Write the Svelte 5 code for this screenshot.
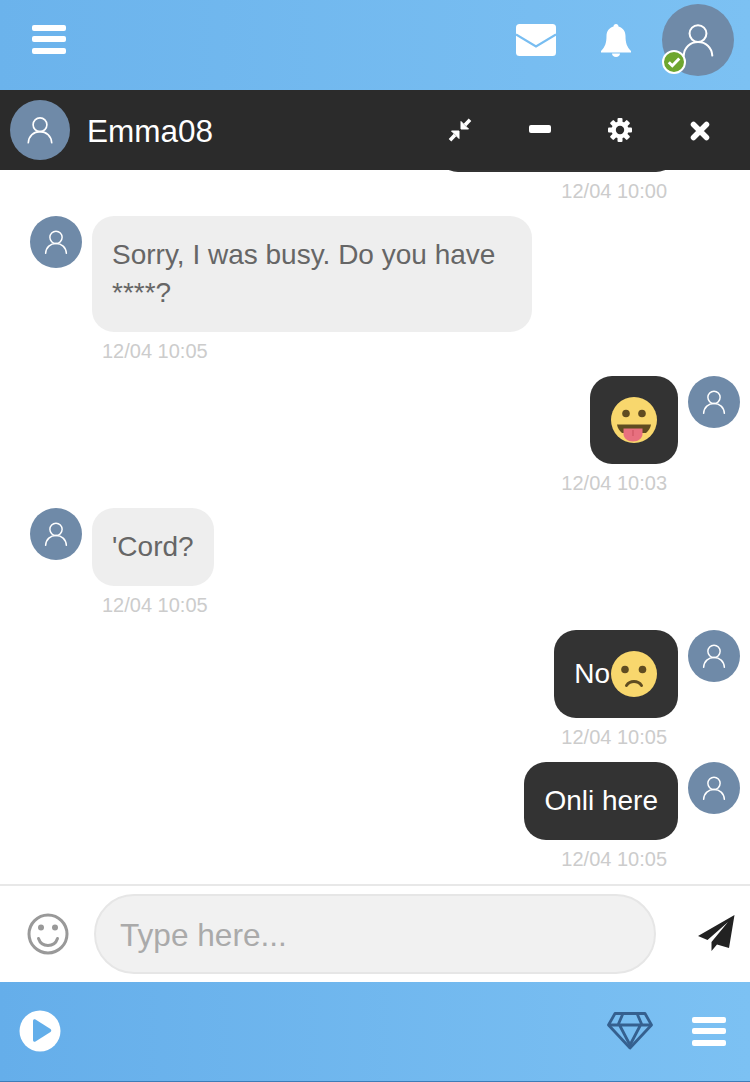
<script>
    // first message sits mostly under the header, only its bottom edge shows
    const messages = [
        { mine: true, filler: true, time: "12/04 10:00" },
        { mine: false, text: "Sorry, I was busy. Do you have ****?", time: "12/04 10:05" },
        { mine: true, emoji: "tongue", time: "12/04 10:03" },
        { mine: false, text: "'Cord?", time: "12/04 10:05" },
        { mine: true, text: "No", emoji: "sad", time: "12/04 10:05" },
        { mine: true, text: "Onli here", time: "12/04 10:05" }
    ];
</script>

{#snippet person(size)}
    <svg class="person" width={size} height={size} viewBox="0 0 24 24" fill="none" stroke="#fff" stroke-width="1.1" stroke-linecap="round">
        <circle cx="12" cy="8.500" r="4.600" />
        <path d="M4.200 20.500c.3-4.600 3.600-7.400 7.800-7.400s7.500 2.800 7.800 7.400" />
    </svg>
{/snippet}

{#snippet burger()}
    <div class="burger"><span></span><span></span><span></span></div>
{/snippet}

{#snippet emojiFace(kind)}
    <svg class="emoji" width="48" height="48" viewBox="0 0 48 48">
        <circle cx="24" cy="24" r="23" fill="#f8d76d" />
        {#if kind === "tongue"}
            <circle cx="16" cy="17.500" r="3.800" fill="#5f4c21" />
            <circle cx="32" cy="17.500" r="3.800" fill="#5f4c21" />
            <path d="M7 28.500h34c-.5 3.500-2.500 6.500-5 8.500H12c-2.500-2-4.500-5-5-8.500z" fill="#5f4c21" />
            <path d="M13.500 32.500h19V38c0 4-4 7.500-9.500 7.500s-9.500-3.500-9.500-7.500z" fill="#e8707f" />
            <path d="M23 34v6" stroke="#c9505f" stroke-width="1" />
        {:else}
            <circle cx="15" cy="19.500" r="3.800" fill="#5f4c21" />
            <circle cx="32.500" cy="19.500" r="3.800" fill="#5f4c21" />
            <path d="M16.500 35.500c2-3 4.500-4 7.500-4s5.500 1 7.500 4" fill="none" stroke="#5f4c21" stroke-width="3" stroke-linecap="round" />
        {/if}
    </svg>
{/snippet}

<div class="page">
    <header class="topbar">
        {@render burger()}
        <div class="top-actions">
            <svg width="40" height="32" viewBox="0 0 40 32">
                <rect width="40" height="32" rx="3.500" fill="#fff" />
                <path d="M0 10.500l20 12 20-12" fill="none" stroke="#78bdf1" stroke-width="2.200" />
            </svg>
            <svg class="bell" width="30" height="33" viewBox="0 0 30 33">
                <path d="M15 0c1.500 0 2.500 1 2.500 2.500 4 1 7 4.500 7 9.500 0 7 1.500 11 5.500 15v1.500H0V27c4-4 5.500-8 5.500-15 0-5 3-8.500 7-9.500C12.500 1 13.500 0 15 0z" fill="#fff" />
                <path d="M11 29.500h8c0 2-1.800 3.500-4 3.500s-4-1.500-4-3.500z" fill="#fff" />
            </svg>
            <div class="me">
                {@render person(44)}
                <span class="online">
                    <svg width="14" height="12" viewBox="0 0 14 12"><path d="M1.800 6.200l3.500 3.500 7-7.200" fill="none" stroke="#fff" stroke-width="3" /></svg>
                </span>
            </div>
        </div>
    </header>

    <div class="chat-head">
        <div class="avatar big">{@render person(36)}</div>
        <div class="name">Emma08</div>
        <div class="head-actions">
            <button aria-label="compress">
                <svg width="24" height="24" viewBox="0 0 24 24" fill="#fff" stroke="#fff">
                    <path d="M13 11V3.500l7.500 7.500z" stroke-width="1" stroke-linejoin="round" />
                    <path d="M11 13v7.500L3.500 13z" stroke-width="1" stroke-linejoin="round" />
                    <path d="M17 7l5-5.200M7 17l-5 5.200" stroke-width="3.600" />
                </svg>
            </button>
            <button aria-label="minimise"><span class="dash"></span></button>
            <button aria-label="settings">
                <svg width="24" height="24" viewBox="0 0 24 24">
                    <g fill="#fff">
                        <rect x="9.500" y="0" width="5" height="24" rx="1" />
                        <rect x="9.500" y="0" width="5" height="24" rx="1" transform="rotate(45 12 12)" />
                        <rect x="9.500" y="0" width="5" height="24" rx="1" transform="rotate(90 12 12)" />
                        <rect x="9.500" y="0" width="5" height="24" rx="1" transform="rotate(135 12 12)" />
                        <circle cx="12" cy="12" r="8.500" />
                    </g>
                    <circle cx="12" cy="12" r="4.200" fill="#2b2b2b" />
                </svg>
            </button>
            <button aria-label="close">
                <svg class="cross" width="20" height="20" viewBox="0 0 20 20"><path d="M3.500 3.500l13 13M16.500 3.500l-13 13" stroke="#fff" stroke-width="5.500" stroke-linecap="round" /></svg>
            </button>
        </div>
    </div>

    <main class="messages">
        {#each messages as m}
            <div class="msg" class:mine={m.mine}>
                <div class="row">
                    <div class="avatar">{@render person(32)}</div>
                    <div class="bubble" class:filler={m.filler}>
                        {#if m.text}<span>{m.text}</span>{/if}
                        {#if m.emoji}{@render emojiFace(m.emoji)}{/if}
                    </div>
                </div>
                <div class="time">{m.time}</div>
            </div>
        {/each}
    </main>

    <div class="composer">
        <svg class="smile" width="42" height="42" viewBox="0 0 42 42" fill="none" stroke="#999" stroke-width="3">
            <circle cx="21" cy="21" r="19" />
            <circle cx="14" cy="14.500" r="3" fill="#999" stroke="none" />
            <circle cx="28" cy="14.500" r="3" fill="#999" stroke="none" />
            <path d="M11.500 25.500c1.500 4.500 5 7 9.500 7s8-2.500 9.500-7" stroke-linecap="round" />
        </svg>
        <input type="text" placeholder="Type here..." />
        <svg class="send" width="38" height="38" viewBox="0 0 38 38">
            <path d="M36.500 0L0 21l9.500 4L30 7 13.500 27v9l5.500-6.500L31 33z" fill="#222" />
        </svg>
    </div>

    <footer class="bottombar">
        <svg width="42" height="42" viewBox="0 0 42 42">
            <circle cx="21" cy="21" r="20.500" fill="#fff" />
            <path d="M14 11c0-1.500 1.300-2.200 2.500-1.500l15 9.500c1 .7 1 2.300 0 3l-15 9.500c-1.200.7-2.500 0-2.500-1.500z" fill="#62aeea" />
        </svg>
        <div class="bottom-right">
            <svg width="46" height="38" viewBox="0 0 46 38" fill="none" stroke="#35608f" stroke-width="2.800" stroke-linejoin="round">
                <path d="M8 1.500h30L44.500 13 23 36 1.500 13z" />
                <path d="M1.500 13h43M11 13l5-11.500M35 13L30 1.500M12.500 13L23 33l10.500-20" />
            </svg>
            {@render burger()}
        </div>
    </footer>
</div>

<style>
    :global(body) {
        font-family: "Liberation Sans", Arial, sans-serif;
    }

    .page {
        width: 750px;
        height: 1082px;
        display: flex;
        flex-direction: column;
        overflow: hidden;
        background: #fff;
    }

    .topbar {
        height: 90px;
        flex-shrink: 0;
        display: flex;
        align-items: center;
        justify-content: space-between;
        padding: 0 16px 0 32px;
        box-sizing: border-box;
        background: linear-gradient(90deg, #6bb3ec, #7cc1f3);
    }

    .burger {
        width: 34px;
        display: flex;
        flex-direction: column;
        gap: 5.5px;
    }

    .burger span {
        height: 6px;
        background: #fff;
        border-radius: 2px;
    }

    .topbar .burger {
        margin-top: -12px;
    }

    .top-actions {
        display: flex;
        align-items: center;
    }

    .top-actions > svg {
        margin-top: -10px;
    }

    .bell {
        margin-left: 45px;
        margin-right: 31px;
    }

    .me {
        position: relative;
        width: 72px;
        height: 72px;
        margin-top: -10px;
        border-radius: 50%;
        background: #6f8aa8;
        display: flex;
        align-items: center;
        justify-content: center;
    }

    .online {
        position: absolute;
        left: 0;
        bottom: 2px;
        width: 20px;
        height: 20px;
        border: 2px solid #fff;
        border-radius: 50%;
        background: #6ea62f;
        display: flex;
        align-items: center;
        justify-content: center;
    }

    .chat-head {
        position: relative;
        z-index: 1;
        height: 80px;
        flex-shrink: 0;
        display: flex;
        align-items: center;
        padding: 0 10px;
        box-sizing: border-box;
        background: #2b2b2b;
    }

    .avatar {
        width: 52px;
        height: 52px;
        flex-shrink: 0;
        border-radius: 50%;
        background: #6f8aa8;
        display: flex;
        align-items: center;
        justify-content: center;
    }

    .avatar.big {
        width: 60px;
        height: 60px;
    }

    .name {
        margin-left: 17px;
        padding-top: 2px;
        flex: 1;
        font-size: 31.5px;
        color: #fff;
    }

    .head-actions {
        display: flex;
    }

    button {
        width: 80px;
        height: 80px;
        padding: 0;
        border: 0;
        background: none;
        display: flex;
        align-items: center;
        justify-content: center;
    }

    .dash {
        width: 22px;
        height: 8px;
        margin-top: -2px;
        border-radius: 2px;
        background: #fff;
    }

    .cross {
        margin-top: 2px;
    }

    .messages {
        flex: 1;
        min-height: 0;
        display: flex;
        flex-direction: column;
        justify-content: flex-end;
        overflow: hidden;
        padding: 0 10px 0 30px;
    }

    .msg {
        flex-shrink: 0;
        display: flex;
        flex-direction: column;
        margin-bottom: 14px;
    }

    .row {
        display: flex;
        gap: 10px;
        align-items: flex-start;
    }

    .mine .row {
        flex-direction: row-reverse;
    }

    .bubble {
        max-width: 400px;
        padding: 20px;
        border-radius: 22px;
        background: #eee;
        color: #666;
        font-size: 28px;
        line-height: 38px;
        display: flex;
        align-items: center;
    }

    .mine .bubble {
        background: #333;
        color: #fff;
    }

    .bubble.filler {
        width: 202px;
        height: 38px;
    }

    .emoji {
        display: block;
    }

    .time {
        margin: 8px 0 0 72px;
        height: 22px;
        line-height: 22px;
        font-size: 20px;
        color: #ccc;
    }

    .mine .time {
        margin: 8px 73px 0 0;
        text-align: right;
    }

    .composer {
        height: 98px;
        flex-shrink: 0;
        display: flex;
        align-items: center;
        box-sizing: border-box;
        border-top: 2px solid #e8e8e8;
    }

    .smile {
        margin-left: 27px;
        flex-shrink: 0;
    }

    input {
        width: 562px;
        height: 80px;
        margin-left: 25px;
        padding: 2px 24px 0;
        box-sizing: border-box;
        border: 2px solid #e6e6e6;
        border-radius: 40px;
        background: #f1f1f1;
        font: 31.6px "Liberation Sans", Arial, sans-serif;
        outline: none;
    }

    input::placeholder {
        color: #aaa;
        opacity: 1;
    }

    .send {
        margin-left: 42px;
        flex-shrink: 0;
    }

    .bottombar {
        height: 100px;
        flex-shrink: 0;
        display: flex;
        align-items: center;
        justify-content: space-between;
        padding: 0 24px 1px 19px;
        box-sizing: border-box;
        border-bottom: 1px solid #3d7db8;
        background: linear-gradient(90deg, #65aeea, #7cc1f3);
    }

    .bottom-right {
        display: flex;
        align-items: center;
        gap: 39px;
    }
</style>
